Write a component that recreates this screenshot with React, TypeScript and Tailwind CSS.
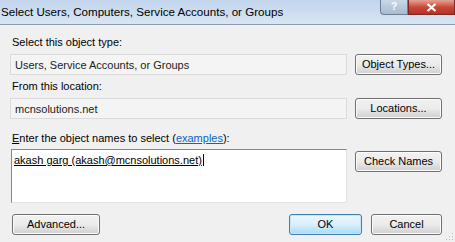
import React from "react";

const font = { fontFamily: '"Liberation Sans", Arial, sans-serif' };

function Btn({ children, primary, w }: { children: React.ReactNode; primary?: boolean; w: string }) {
  return (
    <button
      className={
        (primary
          ? "border-[#3c7fb1] bg-gradient-to-b from-[#eaf6fd] via-[#d9f0fc] to-[#a7d9f5] shadow-[inset_0_0_0_1px_#c8e8fa] "
          : "border-[#707070] bg-gradient-to-b from-[#f2f2f2] via-[#ebebeb] to-[#cfcfcf] shadow-[inset_0_0_0_1px_#fcfcfc] ") +
        "block h-[21px] shrink-0 rounded-[3px] border text-[11px] leading-[19px] text-black " +
        w
      }
    >
      {children}
    </button>
  );
}

function ReadBox({ children }: { children: React.ReactNode }) {
  return (
    <div className="flex h-[21px] flex-1 items-center border border-[#dadada] bg-[#f4f4f4] pl-[4px] text-[11px] text-[#222]">
      {children}
    </div>
  );
}

export default function App() {
  return (
    <div className="relative h-[242px] w-[455px] overflow-hidden bg-[#f0f0f0] leading-[14px]" style={font}>
      {/* title bar */}
      <div className="relative flex h-[25px] items-center border-b border-[#8a9bb1] bg-gradient-to-b from-[#c2d5ec] to-[#d9e5f3] pl-[1px]">
        <span className="text-[11.6px] text-black">Select Users, Computers, Service Accounts, or Groups</span>
        <div className="absolute right-0 top-0 flex">
          <div className="flex h-[15px] w-[28px] items-center justify-center rounded-bl-[4px] border border-t-0 border-[#6d7d93] bg-gradient-to-b from-[#c9d7e8] to-[#a9bbd2] text-[10px] font-bold text-white">
            ?
          </div>
          <div className="flex h-[15px] w-[47px] items-center justify-center border border-t-0 border-[#7a2a22] bg-gradient-to-b from-[#e3a196] via-[#c9493a] to-[#b8301f]">
            <svg width="11" height="9" viewBox="0 0 11 9">
              <path d="M1.5 1 L9.5 8 M9.5 1 L1.5 8" stroke="#fff" strokeWidth="2.2" />
            </svg>
          </div>
        </div>
      </div>

      <div className="pl-[10px] pr-[13px]">
        <div className="mt-[10px] h-[14px] pl-[2px] text-[11px] text-black">Select this object type:</div>
        <div className="mt-[5px] flex gap-[8px]">
          <ReadBox>Users, Service Accounts, or Groups</ReadBox>
          <Btn w="w-[87px]">Object Types...</Btn>
        </div>

        <div className="mt-[4px] h-[14px] pl-[2px] text-[11px] text-black">From this location:</div>
        <div className="mt-[5px] flex gap-[8px]">
          <ReadBox>mcnsolutions.net</ReadBox>
          <Btn w="w-[87px]">Locations...</Btn>
        </div>

        <div className="mt-[12px] h-[14px] pl-[2px] text-[11px] text-black">
          <span className="underline">E</span>nter the object names to select (
          <span className="text-[#0b63c9] underline">examples</span>):
        </div>
        <div className="mt-[4px] flex items-start gap-[8px] pl-[1px]">
          <div className="h-[54px] flex-1 border border-b-[#e3e3e3] border-l-[#828790] border-r-[#e3e3e3] border-t-[#828790] bg-white pl-[2px] pt-[2px] text-[11px] leading-[13px] text-black">
            <span className="underline">akash garg (akash@mcnsolutions.net)</span>
            <span className="ml-[1px] inline-block h-[12px] w-[1px] translate-y-[2px] bg-black" />
          </div>
          <div className="mt-[2px] flex">
            <Btn w="w-[87px]">Check Names</Btn>
          </div>
        </div>

        <div className="mt-[11px] flex items-center pl-[2px]">
          <Btn w="w-[88px]">Advanced...</Btn>
          <div className="ml-auto flex gap-[9px]">
            <Btn primary w="w-[73px]">OK</Btn>
            <Btn w="w-[71px]">Cancel</Btn>
          </div>
        </div>
      </div>

      {/* resize grip */}
      <svg className="absolute bottom-[1px] right-[1px]" width="9" height="9" viewBox="0 0 9 9">
        <g fill="#b8b8b8">
          <rect x="7" y="1" width="1" height="1" />
          <rect x="4" y="4" width="1" height="1" />
          <rect x="7" y="4" width="1" height="1" />
          <rect x="1" y="7" width="1" height="1" />
          <rect x="4" y="7" width="1" height="1" />
          <rect x="7" y="7" width="1" height="1" />
        </g>
      </svg>
    </div>
  );
}
